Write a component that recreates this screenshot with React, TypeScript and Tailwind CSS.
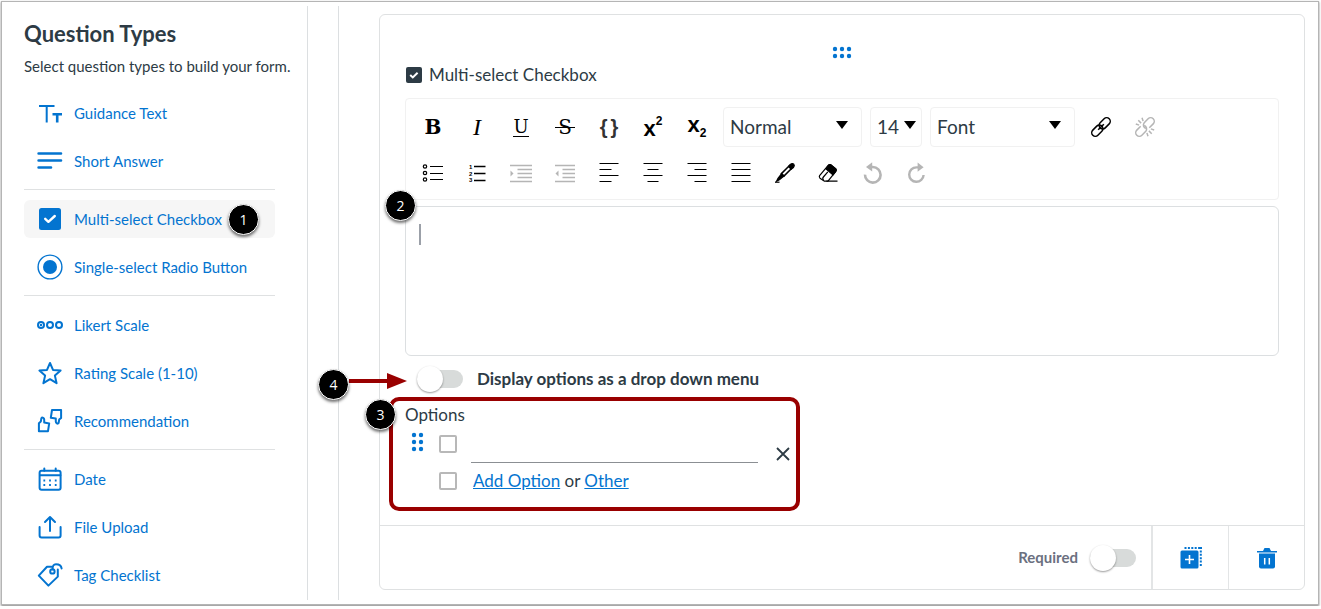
import { useState } from "react";
import type { ReactNode } from "react";
import clsx from "clsx";

type QuestionType = {
  id: string;
  label: string;
  icon: ReactNode;
};

const Icon = ({ children }: { children: ReactNode }) => (
  <svg
    viewBox="0 0 26 26"
    className="size-[26px] shrink-0"
    fill="none"
    stroke="currentColor"
    strokeWidth="2"
    strokeLinecap="round"
    strokeLinejoin="round"
    aria-hidden="true"
  >
    {children}
  </svg>
);

const thumb = "M1.9 23.2V15.2L3.8 13.6L4.4 10.2Q5 9.2 6.2 9.8Q7.2 10.4 7.2 11.6V14.6L12.2 15.4L11 23.2Z";

const groups: QuestionType[][] = [
  [
    {
      id: "guidance",
      label: "Guidance Text",
      icon: (
        <Icon>
          <g strokeLinecap="butt">
            <path d="M2 6H17.5M9.7 6V22.5" />
            <path d="M15.5 14.2H25M20.2 14V22.5" strokeWidth="2.6" />
          </g>
        </Icon>
      ),
    },
    {
      id: "short",
      label: "Short Answer",
      icon: (
        <Icon>
          <path d="M1.6 5.5H24M1.6 12.5H24M1.6 19.5H14" strokeWidth="2.6" />
        </Icon>
      ),
    },
  ],
  [
    {
      id: "multi",
      label: "Multi-select Checkbox",
      icon: (
        <Icon>
          <rect x="2" y="2" width="22" height="22" rx="2.5" fill="currentColor" stroke="none" />
          <path d="M8.2 12.8L11.4 15.8L17.8 10" stroke="white" strokeWidth="2.4" />
        </Icon>
      ),
    },
    {
      id: "single",
      label: "Single-select Radio Button",
      icon: (
        <Icon>
          <circle cx="13" cy="13" r="11.9" strokeWidth="1.4" />
          <circle cx="13" cy="13" r="7" fill="currentColor" stroke="none" />
        </Icon>
      ),
    },
  ],
  [
    {
      id: "likert",
      label: "Likert Scale",
      icon: (
        <Icon>
          <circle cx="4" cy="13" r="3" />
          <circle cx="4" cy="13" r="1.2" fill="currentColor" stroke="none" />
          <circle cx="13" cy="13" r="3" />
          <circle cx="22" cy="13" r="3" />
        </Icon>
      ),
    },
    {
      id: "rating",
      label: "Rating Scale (1-10)",
      icon: (
        <Icon>
          <path d="M13 3L16 9.9L23.6 10.6L17.9 15.6L19.6 23.2L13 19.2L6.4 23.2L8.1 15.6L2.4 10.6L10 9.9Z" />
        </Icon>
      ),
    },
    {
      id: "recommendation",
      label: "Recommendation",
      icon: (
        <Icon>
          <path d={thumb} />
          <path d={thumb} transform="rotate(180 13 12.6)" />
        </Icon>
      ),
    },
  ],
  [
    {
      id: "date",
      label: "Date",
      icon: (
        <Icon>
          <rect x="2.6" y="4.8" width="21" height="19" rx="2" />
          <path d="M3 9.2H23.4M7.3 2.5V4.8M18.7 2.5V4.8" />
          <path d="M7.3 14.5H7.3M13 14.5H13M18.7 14.5H18.7M7.3 19H7.3M13 19H13M18.7 19H18.7" strokeLinecap="square" strokeWidth="1.8" />
        </Icon>
      ),
    },
    {
      id: "upload",
      label: "File Upload",
      icon: (
        <Icon>
          <path d="M2.6 13V21.5Q2.6 23.5 4.6 23.5H21.6Q23.6 23.5 23.6 21.5V13" />
          <path d="M13 17V3M8 8L13 3L18 8" />
        </Icon>
      ),
    },
    {
      id: "tag",
      label: "Tag Checklist",
      icon: (
        <Icon>
          <path d="M14.5 4.8H10L1.8 13.6L11.4 23.6L20.8 14.6V7.5" />
          <circle cx="15.4" cy="9.4" r="2.2" />
          <path d="M15.6 7.4C15.4 3.8 16.6 2.2 19 2.2C22.4 2.2 24.2 3.6 24.6 6.4" />
        </Icon>
      ),
    },
  ],
];

const Badge = ({ n, className }: { n: number; className: string }) => (
  <span
    className={clsx(
      "absolute z-10 flex size-[31px] items-center justify-center rounded-full border border-white bg-black font-['Open_Sans',sans-serif] text-sm text-white shadow-[0_2px_3px_rgba(0,0,0,0.55)]",
      className
    )}
  >
    {n}
  </span>
);

const Toggle = ({ id }: { id: string }) => (
  <input
    id={id}
    type="checkbox"
    role="switch"
    className="relative h-[18px] w-[46px] shrink-0 cursor-pointer appearance-none rounded-full bg-[#d8dbda] before:absolute before:-top-1 before:left-0 before:size-[26px] before:rounded-full before:bg-white before:shadow-[0_1px_2px_rgba(0,0,0,0.4)] checked:bg-[#0374d0] checked:before:left-5"
  />
);

const Tool = ({ label, disabled, children }: { label: string; disabled?: boolean; children: ReactNode }) => (
  <button
    type="button"
    aria-label={label}
    disabled={disabled}
    className={clsx("flex h-10 w-11 items-center justify-center", disabled ? "text-[#b5b5b5]" : "text-black")}
  >
    {children}
  </button>
);

const ToolIcon = ({ children, width = 1.2 }: { children: ReactNode; width?: number }) => (
  <svg viewBox="0 0 24 24" className="size-6" fill="none" stroke="currentColor" strokeWidth={width} aria-hidden="true">
    {children}
  </svg>
);

const ToolSelect = ({
  label,
  options,
  className,
  arrow,
}: {
  label: string;
  options: string[];
  className: string;
  arrow: string;
}) => (
  <div className={clsx("relative h-10", className)}>
    <select
      aria-label={label}
      className="h-full w-full appearance-none rounded-sm border border-[#f1f1f1] bg-white pl-1.5 text-[19px] text-[#2d3b45]"
    >
      {options.map((option) => (
        <option key={option}>{option}</option>
      ))}
    </select>
    <svg viewBox="0 0 12 8" className={clsx("pointer-events-none absolute top-3.5 h-2 w-3", arrow)} aria-hidden="true">
      <path d="M0 0H12L6 8Z" />
    </svg>
  </div>
);

const Toolbar = () => (
  <div className="flex flex-col gap-1.5 rounded-sm border border-[#f1f1f1] px-[5px] pt-2 pb-1.5">
    <div className="flex flex-wrap items-center">
      <Tool label="Bold">
        <span className="font-['DejaVu_Serif',serif] text-xl font-bold">B</span>
      </Tool>
      <Tool label="Italic">
        <span className="font-['Liberation_Serif',serif] text-2xl italic">I</span>
      </Tool>
      <Tool label="Underline">
        <span className="border-b border-black font-['DejaVu_Serif',serif] text-lg leading-[18px]">U</span>
      </Tool>
      <Tool label="Strikethrough">
        <span className="relative font-['DejaVu_Serif',serif] text-xl">
          S
          <span className="absolute inset-x-[-3px] top-1/2 h-px bg-black" />
        </span>
      </Tool>
      <Tool label="Code block">
        <span className="flex gap-[3px] font-['Liberation_Sans',sans-serif] text-xl font-bold text-[#333]">
          <span>{"{"}</span>
          <span>{"}"}</span>
        </span>
      </Tool>
      <Tool label="Superscript">
        <span className="flex font-['Liberation_Sans',sans-serif] font-bold">
          <span className="pt-1 text-[22px] leading-5">x</span>
          <span className="text-xs leading-3">2</span>
        </span>
      </Tool>
      <Tool label="Subscript">
        <span className="flex items-end font-['Liberation_Sans',sans-serif] font-bold">
          <span className="pb-1 text-[22px] leading-5">x</span>
          <span className="text-xs leading-3">2</span>
        </span>
      </Tool>
      <div className="mr-1 ml-1 flex gap-2">
        <ToolSelect label="Text style" options={["Normal", "Heading 1", "Heading 2"]} className="w-[139px]" arrow="right-3.5" />
        <ToolSelect label="Font size" options={["14", "16", "18"]} className="w-[52px]" arrow="right-1.5" />
        <ToolSelect label="Font family" options={["Font", "Lato", "Georgia"]} className="w-[145px]" arrow="right-3.5" />
      </div>
      <Tool label="Insert link">
        <ToolIcon width={1.5}>
          <g transform="rotate(-45 12 12)">
            <rect x="0.4" y="8.4" width="12.8" height="7.2" rx="3.6" />
            <rect x="10.8" y="8.4" width="12.8" height="7.2" rx="3.6" />
            <path d="M8 12H16" />
          </g>
        </ToolIcon>
      </Tool>
      <Tool label="Remove link" disabled>
        <ToolIcon width={1.5}>
          <g transform="rotate(-45 12 12)">
            <path d="M9.5 8.4H4A3.6 3.6 0 0 0 4 15.6H9.5A3.6 3.6 0 0 0 12.4 10.4" />
            <path d="M14.5 15.6H20A3.6 3.6 0 0 0 20 8.4H14.5A3.6 3.6 0 0 0 11.6 13.6" />
            <path d="M12 6.5V2.5M9.2 6.5L7.6 3.4M14.8 6.5L16.4 3.4M12 17.5V21.5M9.2 17.5L7.6 20.6M14.8 17.5L16.4 20.6" />
          </g>
        </ToolIcon>
      </Tool>
    </div>
    <div className="flex flex-wrap items-center">
      <Tool label="Bulleted list">
        <ToolIcon>
          <circle cx="4" cy="5.5" r="1.7" />
          <circle cx="4" cy="12" r="1.7" />
          <circle cx="4" cy="18.5" r="1.7" />
          <path d="M9 5.5H22M9 12.5H22M9 18.5H22" />
        </ToolIcon>
      </Tool>
      <Tool label="Numbered list">
        <ToolIcon width={1.6}>
          <path d="M9 5.5H20.5M9 12.5H20.5M9 19.5H20.5" />
          <g fill="currentColor" stroke="none" fontSize="6" fontWeight="bold" fontFamily="Liberation Sans, sans-serif">
            <text x="4" y="8">1</text>
            <text x="4" y="14.5">2</text>
            <text x="4" y="21">3</text>
          </g>
        </ToolIcon>
      </Tool>
      <Tool label="Increase indent" disabled>
        <ToolIcon width={1.5}>
          <path d="M1 4.5H23M8.5 8.5H23M8.5 12.5H23M8.5 16.5H23M1 20.5H23" />
          <path d="M1.5 9.5L4.5 12.5L1.5 15.5Z" fill="currentColor" stroke="none" />
        </ToolIcon>
      </Tool>
      <Tool label="Decrease indent" disabled>
        <ToolIcon width={1.5}>
          <path d="M2 4.5H22M9.5 8.5H22M9.5 12.5H22M9.5 16.5H22M2 20.5H22" />
          <path d="M5.5 9.5L2.5 12.5L5.5 15.5Z" fill="currentColor" stroke="none" />
        </ToolIcon>
      </Tool>
      <Tool label="Align left">
        <ToolIcon>
          <path d="M2.5 2.5H21.5M2.5 8.5H14.5M2.5 14.5H21.5M2.5 20.5H14.5" />
        </ToolIcon>
      </Tool>
      <Tool label="Align center">
        <ToolIcon>
          <path d="M2.5 2.5H21.5M6.5 8.5H17.5M2.5 14.5H21.5M6.5 20.5H17.5" />
        </ToolIcon>
      </Tool>
      <Tool label="Align right">
        <ToolIcon>
          <path d="M2.5 2.5H21.5M9.5 8.5H21.5M2.5 14.5H21.5M9.5 20.5H21.5" />
        </ToolIcon>
      </Tool>
      <Tool label="Justify">
        <ToolIcon>
          <path d="M2.5 2.5H21.5M2.5 8.5H21.5M2.5 14.5H21.5M2.5 20.5H21.5" />
        </ToolIcon>
      </Tool>
      <Tool label="Text color">
        <ToolIcon>
          <path d="M8.4 12.6L15.8 5.2L18.3 7.7L10.9 15.1Z" fill="white" strokeWidth="1.5" />
          <path d="M15.5 5.5L17.2 3.4Q19.4 1.8 20.8 3.2Q22 4.6 20.4 6.6L18.2 8.2Z" fill="currentColor" />
          <path d="M8.6 12.6L11 15L6.4 18.8L3.6 20.2L5 17.4Z" fill="currentColor" />
          <path d="M2 21.2H6.5" />
        </ToolIcon>
      </Tool>
      <Tool label="Remove formatting">
        <ToolIcon>
          <path d="M2.6 14.6L11.4 4.2Q12.4 3.2 13.6 3.8L18.8 8Q19.8 9.2 18.8 10.4L11 20.2H7.4L3 17.2Q1.8 15.8 2.6 14.6Z" fill="white" />
          <path d="M10.2 6.2L11.8 4Q12.8 3.2 13.8 3.8L18.8 8Q19.8 9.2 18.8 10.4L16 13.8L9 8Z" fill="currentColor" />
          <path d="M6.6 19.4Q5 17.6 6.4 16L10.8 10.8M9.4 20.2H20.5" />
        </ToolIcon>
      </Tool>
      <Tool label="Undo" disabled>
        <ToolIcon width={2.6}>
          <path d="M4 13.6A7.8 7.8 0 1 0 11.8 6H10" />
          <path d="M5 6L11.2 1.2V10.6Z" fill="currentColor" stroke="none" />
        </ToolIcon>
      </Tool>
      <Tool label="Redo" disabled>
        <ToolIcon width={2.4}>
          <path d="M18.6 14A7.2 7.2 0 1 1 11.4 6.4H13.5" />
          <path d="M18.6 6.2L12.6 1.4V10.8Z" fill="currentColor" stroke="none" />
        </ToolIcon>
      </Tool>
    </div>
  </div>
);

const Sidebar = ({ selected, onSelect }: { selected: string; onSelect: (id: string) => void }) => (
  <aside className="w-[306px] shrink-0 border-r border-[#dcdfe1] pr-2 pl-[22px]">
    <h1 className="pt-3 text-[22px] leading-8 font-bold">Question Types</h1>
    <p className="mt-1 text-[15px] leading-6 whitespace-nowrap">Select question types to build your form.</p>
    <nav className="mt-4 mr-6 flex flex-col pb-1.5">
      {groups.map((group, i) => (
        <div
          key={i}
          className="mb-2.5 flex flex-col gap-2.5 border-b border-[#dfe1e2] pb-[9px] last:mb-0 last:border-0 last:pb-0"
        >
          {group.map((type) => (
            <button
              key={type.id}
              type="button"
              onClick={() => onSelect(type.id)}
              className={clsx(
                "relative flex h-[38px] items-center gap-[11px] rounded-md pl-[13px] text-left text-[15px] whitespace-nowrap text-[#0374d0]",
                selected === type.id && "bg-[#f6f6f6]"
              )}
            >
              {type.icon}
              <span>{type.label}</span>
              {type.id === "multi" && <Badge n={1} className="top-1 right-4" />}
            </button>
          ))}
        </div>
      ))}
    </nav>
  </aside>
);

export default function App() {
  const [selected, setSelected] = useState("multi");

  return (
    <div className="m-px mr-[2px] flex border border-[#b5b5b5] bg-white py-1 font-[Lato,'Open_Sans',sans-serif] text-[#2d3b45] shadow-[0_1px_2px_rgba(0,0,0,0.5)]">
      <Sidebar selected={selected} onSelect={setSelected} />

      <main className="ml-[30px] min-w-0 flex-1 border-l border-[#dcdfe1] pt-2 pr-[13px] pb-2.5 pl-10">
        <div className="flex flex-col rounded-md border border-[#dfe1e2]">
          <div className="px-[25px] pt-7 pb-3.5">
            <button type="button" aria-label="Move question" className="mx-auto block text-[#0374d0]">
              <svg viewBox="0 0 20 20" className="size-5" fill="currentColor" aria-hidden="true">
                <circle cx="3" cy="6" r="2.2" />
                <circle cx="10" cy="6" r="2.2" />
                <circle cx="17" cy="6" r="2.2" />
                <circle cx="3" cy="13" r="2.2" />
                <circle cx="10" cy="13" r="2.2" />
                <circle cx="17" cy="13" r="2.2" />
              </svg>
            </button>

            <div className="mb-[11px] flex items-center gap-[7px]">
              <svg viewBox="0 0 16 16" className="ml-px size-4" aria-hidden="true">
                <rect width="16" height="16" rx="2" fill="#2d3b45" />
                <path d="M4.2 8L6.8 10.4L11.6 5.8" fill="none" stroke="white" strokeWidth="2" />
              </svg>
              <h2 className="text-[17px] leading-6">Multi-select Checkbox</h2>
            </div>

            <Toolbar />

            <div className="relative mt-1.5">
              <textarea
                aria-label="Question text"
                defaultValue=""
                className="block h-[150px] w-full resize-none rounded-md border border-[#dcdfe1] p-4 text-lg outline-none"
              />
              <span className="absolute top-[18px] left-3.5 h-[21px] w-0.5 bg-[#9ba0a8]" />
              <Badge n={2} className="-top-4 -left-5" />
            </div>

            <div className="relative mt-[11px] flex h-6 items-center gap-3.5 pl-3">
              <Toggle id="dropdown" />
              <label htmlFor="dropdown" className="text-[17px] leading-6 font-bold">
                Display options as a drop down menu
              </label>
              <Badge n={4} className="top-0.5 -left-[87px]" />
              <svg viewBox="0 0 58 16" className="absolute top-1.5 -left-14 h-4 w-[58px]" fill="#990000" aria-hidden="true">
                <path d="M0 6H38V0L58 8L38 16V10H0Z" />
              </svg>
            </div>

            <section className="relative mt-1.5 -ml-4 w-[411px] rounded-[10px] border-4 border-[#990000] px-3 pt-0.5 pb-3.5">
              <Badge n={3} className="-top-0.5 -left-7" />
              <h3 className="text-[17px] leading-6">Options</h3>
              <div className="flex items-start">
                <button type="button" aria-label="Move option" className="mt-[5px] ml-1.5 text-[#0374d0]">
                  <svg viewBox="0 0 14 20" className="h-5 w-3.5" fill="currentColor" aria-hidden="true">
                    <circle cx="3" cy="3" r="2.2" />
                    <circle cx="10" cy="3" r="2.2" />
                    <circle cx="3" cy="10" r="2.2" />
                    <circle cx="10" cy="10" r="2.2" />
                    <circle cx="3" cy="17" r="2.2" />
                    <circle cx="10" cy="17" r="2.2" />
                  </svg>
                </button>
                <input
                  type="checkbox"
                  aria-label="Option 1 selected"
                  className="mt-2 ml-3.5 size-[18px] appearance-none rounded-xs border-2 border-[#b8b8b8]"
                />
                <input
                  type="text"
                  aria-label="Option 1"
                  className="ml-3.5 h-9 min-w-0 flex-1 border-b border-[#8b8f93] text-[17px] outline-none"
                />
                <button type="button" aria-label="Remove option" className="mt-5 mr-[-6px] ml-[18px]">
                  <svg viewBox="0 0 14 14" className="size-3.5" fill="none" stroke="currentColor" strokeWidth="1.8" aria-hidden="true">
                    <path d="M1 1L13 13M13 1L1 13" />
                  </svg>
                </button>
              </div>
              <div className="mt-1.5 flex items-center pl-[34px] text-[17px] leading-6">
                <input
                  type="checkbox"
                  aria-label="Other option selected"
                  className="mr-4 size-[18px] appearance-none rounded-xs border-2 border-[#b8b8b8]"
                />
                <p>
                  <a href="#add" className="text-[#0374d0] underline">Add Option</a> or{" "}
                  <a href="#other" className="text-[#0374d0] underline">Other</a>
                </p>
              </div>
            </section>
          </div>

          <div className="flex h-16 justify-end border-t border-[#dfe1e2]">
            <div className="flex items-center gap-3 pr-[15px]">
              <label htmlFor="required" className="text-[15px] font-bold text-[#6b7080]">
                Required
              </label>
              <Toggle id="required" />
            </div>
            <button
              type="button"
              aria-label="Duplicate question"
              className="flex w-[77px] items-center justify-center border-l-2 border-[#e3e5e6] text-[#0374d0]"
            >
              <svg viewBox="0 0 22 22" className="size-[22px]" aria-hidden="true">
                <rect x="0.5" y="3.5" width="18" height="18" rx="1.5" fill="currentColor" />
                <path d="M9.5 8V17M5 12.5H14" stroke="white" strokeWidth="1.6" />
                <path d="M4.5 1H22M20.8 0V19" fill="none" stroke="currentColor" strokeWidth="2" strokeDasharray="2 1.4" />
              </svg>
            </button>
            <button
              type="button"
              aria-label="Delete question"
              className="flex w-[76px] items-center justify-center border-l border-[#e3e5e6] text-[#0374d0]"
            >
              <svg viewBox="0 0 20 22" className="h-[22px] w-5" fill="currentColor" aria-hidden="true">
                <path d="M0 4H6L7.5 1H12.5L14 4H20V5.5H0Z" />
                <path d="M2 6.5H18V19.5Q18 21.5 16 21.5H4Q2 21.5 2 19.5Z" />
                <path d="M7.7 11V17.5M12.3 11V17.5" stroke="white" strokeWidth="1.5" />
              </svg>
            </button>
          </div>
        </div>
      </main>
    </div>
  );
}
